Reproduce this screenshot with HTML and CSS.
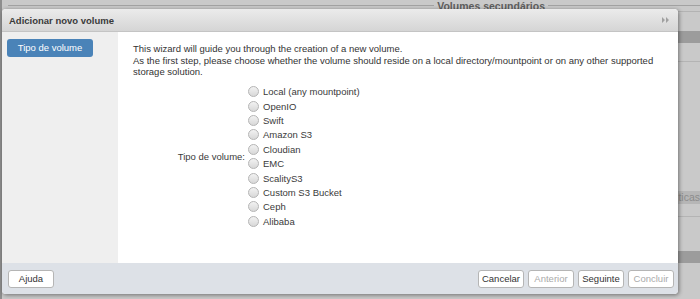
FILE: index.html
```html
<!DOCTYPE html>
<html lang="pt">
<head>
    <meta charset="UTF-8">
    <link rel="stylesheet" href="styles.css">
</head>
<body>

    <div class="page">
        <div class="band top">
            <div class="legend-line"></div>
            <span class="legend">Volumes secundários</span>
            <div class="legend-line right"></div>
        </div>
        <div class="band light b19"></div>
        <div class="band dark"></div>
        <div class="band light b18"></div>
        <div class="band line"></div>
        <div class="band light b129"></div>
        <div class="band mid"><span class="ghost">ticas</span></div>
        <div class="band light b12"></div>
        <div class="band line"></div>
        <div class="band light b34"></div>
        <div class="band dark"></div>
        <div class="band light rest"></div>
    </div>

    <div class="dialog">
        <div class="dialog-head">
            <span class="dialog-title">Adicionar novo volume</span>
            <svg class="collapse" width="8" height="6" viewBox="0 0 8 6">
                <path d="M0 0 L3 3 L0 6 Z M4 0 L7 3 L4 6 Z" fill="#a0a0a0"/>
            </svg>
        </div>
        <div class="dialog-body">
            <div class="steps">
                <div class="step active">Tipo de volume</div>
            </div>
            <div class="content">
                <p class="intro">This wizard will guide you through the creation of a new volume.<br>
                As the first step, please choose whether the volume should reside on a local directory/mountpoint or on any other supported storage solution.</p>
                <div class="field">
                    <label class="field-label">Tipo de volume:</label>
                    <div class="options">
                        <label class="opt"><span class="radio"></span>Local (any mountpoint)</label>
                        <label class="opt"><span class="radio"></span>OpenIO</label>
                        <label class="opt"><span class="radio"></span>Swift</label>
                        <label class="opt"><span class="radio"></span>Amazon S3</label>
                        <label class="opt"><span class="radio"></span>Cloudian</label>
                        <label class="opt"><span class="radio"></span>EMC</label>
                        <label class="opt"><span class="radio"></span>ScalityS3</label>
                        <label class="opt"><span class="radio"></span>Custom S3 Bucket</label>
                        <label class="opt"><span class="radio"></span>Ceph</label>
                        <label class="opt"><span class="radio"></span>Alibaba</label>
                    </div>
                </div>
            </div>
        </div>
        <div class="dialog-foot">
            <button type="button" class="btn">Ajuda</button>
            <div class="foot-right">
                <button type="button" class="btn">Cancelar</button>
                <button type="button" class="btn" disabled>Anterior</button>
                <button type="button" class="btn">Seguinte</button>
                <button type="button" class="btn" disabled>Concluir</button>
            </div>
        </div>
    </div>

</body>
</html>
```
FILE: styles.css
```css
        html, body {
            margin: 0;
            height: 100%;
            overflow: hidden;
        }

        body {
            font-family: "Liberation Sans", Arial, sans-serif;
            font-size: 9.5px;
            color: #333;
            background-color: #c6c6c6;
        }

        /* dimmed page behind the dialog */
        .page {
            display: flex;
            flex-direction: column;
            height: 100%;
            border-left: 2px solid #8e8e8e;
        }

        .band {
            background-color: #c8c8c8;
        }

        .top {
            height: 12px;
            display: flex;
            align-items: center;
            padding: 0 0 0 6px;
            background-color: #c9c9c9;
            border-bottom: 1px solid #b3b3b3;
            box-sizing: border-box;
        }

        .legend-line {
            flex: 1;
            border-top: 1px solid #a2a2a2;
        }

        .legend-line.right {
            flex: none;
            width: 152px;
        }

        .legend {
            padding: 0 3px;
            font-size: 10.5px;
            font-weight: bold;
            color: #5e5e5e;
        }

        .dark {
            height: 12px;
            background-color: #9c9c9c;
        }

        .light {
            background-color: #c9c9c9;
        }

        .b19 { height: 19px; }
        .b18 { height: 18px; }
        .b129 { height: 129px; }
        .b12 { height: 12px; }
        .b34 { height: 34px; }
        .rest { flex: 1; }

        .line {
            height: 1px;
            background-color: #b4b4b4;
        }

        .mid {
            height: 13px;
            background-color: #b6b6b6;
            text-align: right;
            line-height: 13px;
        }

        .ghost {
            color: #8c8c8c;
            font-size: 10.5px;
        }

        /* dialog */
        .dialog {
            position: absolute;
            left: 2px;
            top: 9px;
            width: 676px;
            height: 285px;
            display: flex;
            flex-direction: column;
            background-color: #fff;
            border-radius: 4px;
            overflow: hidden;
            box-shadow: 1px 1px 4px rgba(0, 0, 0, 0.45);
        }

        .dialog-head {
            height: 22px;
            display: flex;
            align-items: center;
            justify-content: space-between;
            padding: 0 8px 0 7px;
            background: linear-gradient(#ebebeb, #d5d5d5);
            border-bottom: 1px solid #c4c4c4;
        }

        .dialog-title {
            font-size: 9.5px;
            font-weight: bold;
            color: #3a3a3a;
        }

        .collapse {
            display: block;
        }

        .dialog-body {
            flex: 1;
            display: flex;
        }

        .steps {
            width: 116px;
            padding: 7px 5px;
            background-color: #efefef;
            box-sizing: border-box;
        }

        .step {
            height: 18px;
            line-height: 17px;
            border-radius: 3px;
            text-align: center;
            color: #fff;
            background-color: #4a83b8;
            width: 86px;
        }

        .content {
            flex: 1;
            padding: 11px 15px;
        }

        .intro {
            margin: 0;
            line-height: 11.5px;
        }

        .field {
            display: flex;
            align-items: center;
            margin-top: 7px;
        }

        .field-label {
            width: 112px;
            text-align: right;
            padding-right: 3px;
            color: #3a3a3a;
        }

        .options {
            display: flex;
            flex-direction: column;
        }

        .opt {
            display: flex;
            align-items: center;
            height: 14.4px;
            color: #3a3a3a;
        }

        .radio {
            width: 9px;
            height: 9px;
            border-radius: 50%;
            border: 1px solid #b4b4b4;
            background: linear-gradient(#f2f2f2, #d8d8d8);
            margin-right: 4px;
        }

        .dialog-foot {
            height: 31px;
            display: flex;
            align-items: center;
            justify-content: space-between;
            padding: 0 4px 0 6px;
            background-color: #dde1e7;
        }

        .foot-right {
            display: flex;
            gap: 4px;
        }

        .btn {
            height: 18px;
            min-width: 46px;
            padding: 0 3px;
            font-family: "Liberation Sans", Arial, sans-serif;
            font-size: 9.5px;
            color: #333;
            background-color: #fff;
            border: 1px solid #b5b5b5;
            border-radius: 3px;
        }

        .btn:disabled {
            color: #aaa;
        }
```
